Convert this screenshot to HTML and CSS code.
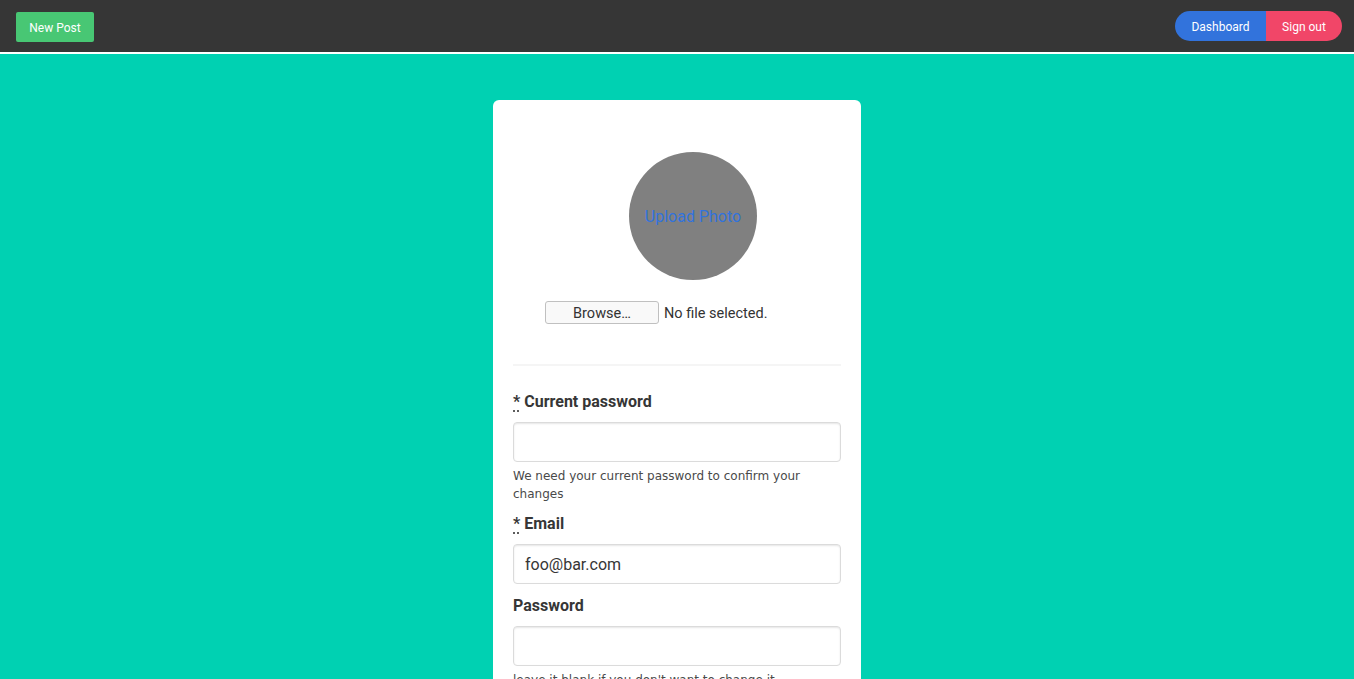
FILE: index.html
```html
<!DOCTYPE html>
<html>
<head>
<meta charset="utf-8">
<link rel="stylesheet" href="styles.css">
</head>
<body>
<nav class="navbar">
  <a class="btn btn-green">New Post</a>
  <div class="addons">
    <a class="btn btn-blue">Dashboard</a>
    <a class="btn btn-red">Sign out</a>
  </div>
</nav>
<main class="page">
  <div class="card">
    <div class="avatar-wrap">
      <div class="avatar"><span>Upload Photo</span></div>
    </div>
    <div class="file-row">
      <div class="file-input">
        <span class="file-btn">Browse…</span>
        <span class="file-name">No file selected.</span>
      </div>
    </div>
    <hr class="divider">
    <div class="field">
      <label class="label"><abbr title="required">*</abbr> Current password</label>
      <input class="input" type="password">
      <p class="help">We need your current password to confirm your changes</p>
    </div>
    <div class="field">
      <label class="label"><abbr title="required">*</abbr> Email</label>
      <input class="input" type="email" value="foo@bar.com">
    </div>
    <div class="field">
      <label class="label">Password</label>
      <input class="input" type="password">
      <p class="help">leave it blank if you don't want to change it</p>
    </div>
  </div>
</main>
</body>
</html>
```
FILE: styles.css
```css
* { box-sizing: border-box; }
html, body { margin: 0; padding: 0; }
body {
  background: #00d1b2;
  font-family: Roboto, "Noto Sans", sans-serif;
  color: #4a4a4a;
  overflow: hidden;
  height: 679px;
}
.navbar {
  height: 54px;
  background: #363636;
  border-bottom: 2px solid #ffffff;
  display: flex;
  justify-content: space-between;
  align-items: flex-start;
  padding: 11px 12px 0 16px;
}
.btn {
  display: inline-flex;
  align-items: center;
  justify-content: center;
  height: 30px;
  color: #ffffff;
  font-size: 12px;
  text-decoration: none;
  cursor: pointer;
}
.btn-green {
  background: #48c774;
  border-radius: 2px;
  width: 78px;
  margin-top: 1px;
  padding-top: 1px;
}
.addons { display: flex; }
.btn-blue {
  background: #3273dc;
  border-radius: 15px 0 0 15px;
  width: 91px;
  padding-top: 1px;
}
.btn-red {
  background: #f14668;
  border-radius: 0 15px 15px 0;
  width: 76px;
  padding-top: 1px;
}
.page {
  display: flex;
  justify-content: center;
  padding-top: 46px;
}
.card {
  width: 368px;
  background: #ffffff;
  border-radius: 6px;
  padding: 52px 20px 20px;
  min-height: 700px;
}
.avatar-wrap {
  display: flex;
  justify-content: center;
  padding-left: 32px;
}
.avatar {
  width: 128px;
  height: 128px;
  border-radius: 50%;
  background: #808080;
  display: flex;
  align-items: center;
  justify-content: center;
}
.avatar span {
  color: #3273dc;
  font-size: 16px;
}
.file-row {
  display: flex;
  justify-content: center;
  margin-top: 21px;
}
.file-input {
  width: 264px;
  display: flex;
  align-items: center;
}
.file-btn {
  width: 114px;
  height: 23px;
  border: 1px solid #c0c0c0;
  border-radius: 3px;
  background: #f9f9f9;
  color: #333333;
  font-size: 14.5px;
  display: flex;
  align-items: center;
  justify-content: center;
  padding-top: 1px;
}
.file-name {
  margin-left: 5px;
  font-size: 14.5px;
  color: #333333;
  padding-top: 1px;
}
.divider {
  border: none;
  height: 2px;
  background: #f5f5f5;
  margin: 40px 0 22px;
}
.field { margin-bottom: 8px; }
.label {
  display: block;
  font-weight: 700;
  font-size: 16px;
  line-height: 24px;
  padding-top: 2px;
  color: #363636;
  margin-bottom: 8px;
}
.label abbr {
  text-decoration: underline dotted;
  text-underline-offset: 4px;
}
.input {
  display: block;
  width: 100%;
  height: 40px;
  border: 1px solid #dbdbdb;
  border-radius: 4px;
  box-shadow: inset 0 1px 2px rgba(10,10,10,0.1);
  padding: 0 11px;
  font-family: Roboto, "Noto Sans", sans-serif;
  font-size: 16px;
  color: #363636;
  background: #ffffff;
}
.help {
  margin: 5px 0 -1px;
  font-family: "DejaVu Sans", sans-serif;
  font-size: 12px;
  line-height: 18px;
  color: #4a4a4a;
}
```
